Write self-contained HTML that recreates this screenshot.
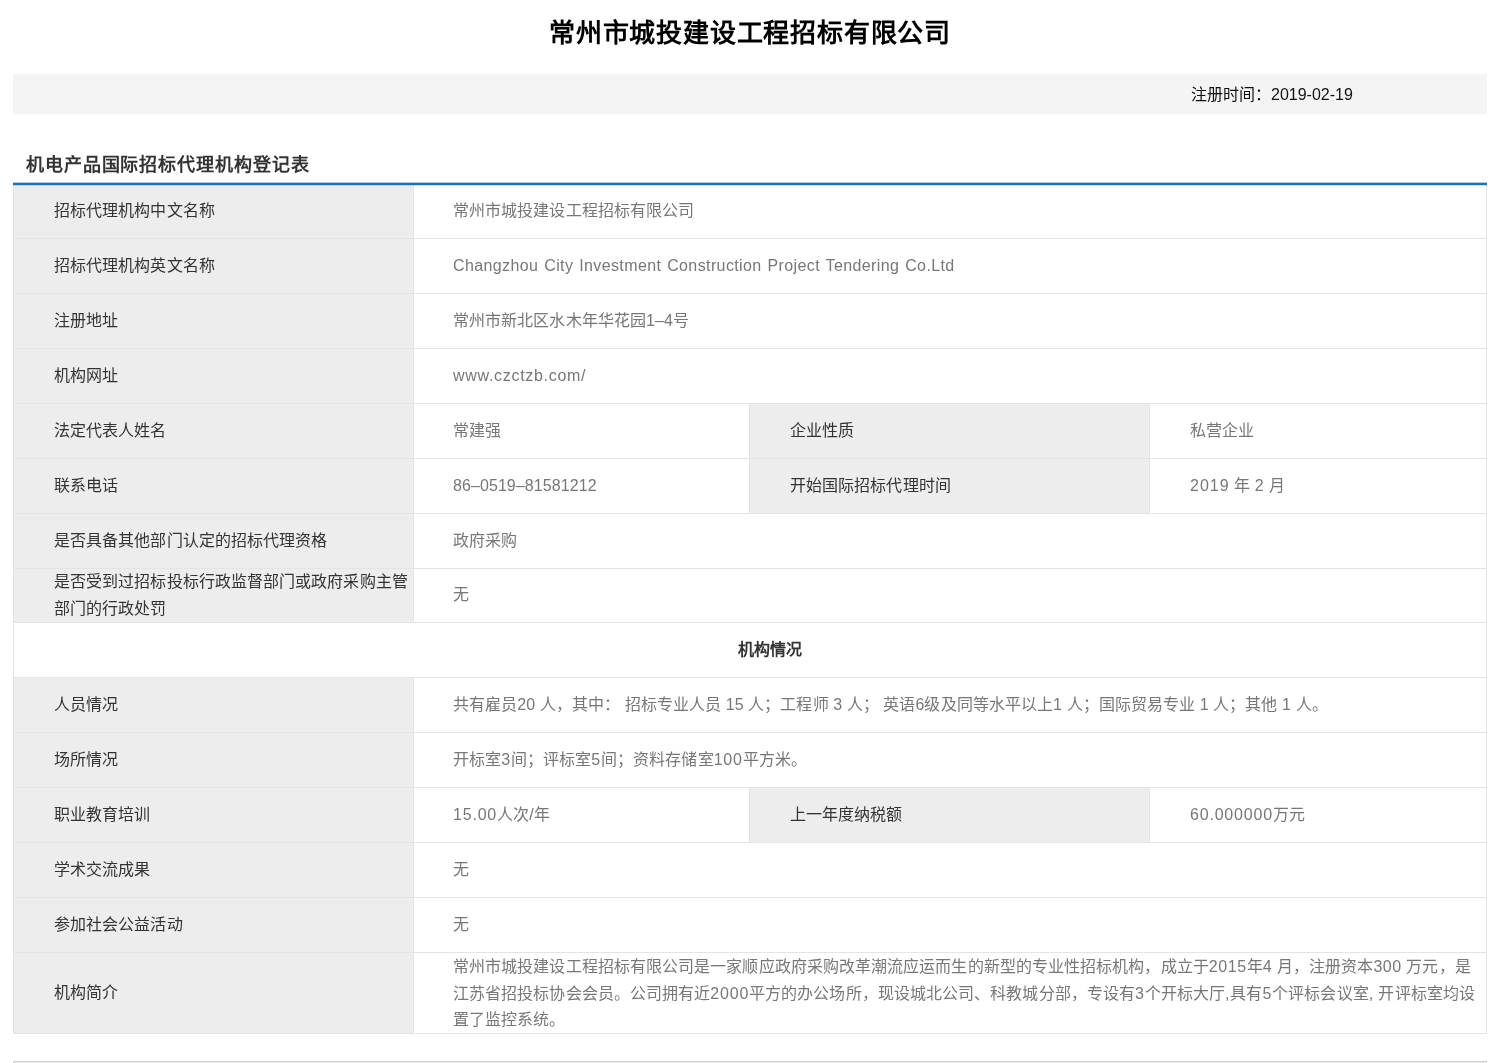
<!DOCTYPE html>
<html lang="zh-CN">
<head>
<meta charset="utf-8">
<style>
html,body{margin:0;padding:0;background:#fff;}
body{width:1500px;height:1063px;overflow:hidden;position:relative;font-family:"Liberation Sans",sans-serif;}
.t,.title,.regtime,.sect{will-change:transform;}
.r{position:absolute;}
.t{position:absolute;white-space:nowrap;font-size:16px;line-height:26.67px;letter-spacing:0.08px;}
.lb{color:#333;}
.vl{color:#777;}
.hd{color:#333;font-weight:bold;}
.title{position:absolute;left:0;top:14px;width:1500px;text-align:center;font-size:26px;letter-spacing:0.8px;font-weight:bold;color:#000;line-height:38px;white-space:nowrap;}
.regtime{position:absolute;left:1191px;top:84.5px;font-size:16px;color:#111;line-height:20px;white-space:nowrap;}
.sect{position:absolute;left:26px;top:151.5px;font-size:18px;letter-spacing:0.9px;font-weight:bold;color:#333;line-height:26px;white-space:nowrap;}
</style>
</head>
<body>
<div class="title">常州市城投建设工程招标有限公司</div>
<div class="r" style="left:13px;top:74px;width:1474px;height:40px;background:#f4f4f4"></div>
<div class="regtime">注册时间：2019-02-19</div>
<div class="sect">机电产品国际招标代理机构登记表</div>
<div class="r" style="left:13px;top:184px;width:400px;height:54px;background:#ededed"></div>
<div class="r" style="left:13px;top:238px;width:400px;height:55px;background:#ededed"></div>
<div class="r" style="left:13px;top:293px;width:400px;height:55px;background:#ededed"></div>
<div class="r" style="left:13px;top:348px;width:400px;height:55px;background:#ededed"></div>
<div class="r" style="left:13px;top:403px;width:400px;height:55px;background:#ededed"></div>
<div class="r" style="left:749px;top:403px;width:400px;height:55px;background:#ededed"></div>
<div class="r" style="left:13px;top:458px;width:400px;height:55px;background:#ededed"></div>
<div class="r" style="left:749px;top:458px;width:400px;height:55px;background:#ededed"></div>
<div class="r" style="left:13px;top:513px;width:400px;height:55px;background:#ededed"></div>
<div class="r" style="left:13px;top:568px;width:400px;height:54px;background:#ededed"></div>
<div class="r" style="left:13px;top:677px;width:400px;height:55px;background:#ededed"></div>
<div class="r" style="left:13px;top:732px;width:400px;height:55px;background:#ededed"></div>
<div class="r" style="left:13px;top:787px;width:400px;height:55px;background:#ededed"></div>
<div class="r" style="left:749px;top:787px;width:400px;height:55px;background:#ededed"></div>
<div class="r" style="left:13px;top:842px;width:400px;height:55px;background:#ededed"></div>
<div class="r" style="left:13px;top:897px;width:400px;height:55px;background:#ededed"></div>
<div class="r" style="left:13px;top:952px;width:400px;height:81px;background:#ededed"></div>
<div class="r" style="left:13px;top:238px;width:1474px;height:1px;background:#e4e4e4"></div>
<div class="r" style="left:13px;top:293px;width:1474px;height:1px;background:#e4e4e4"></div>
<div class="r" style="left:13px;top:348px;width:1474px;height:1px;background:#e4e4e4"></div>
<div class="r" style="left:13px;top:403px;width:1474px;height:1px;background:#e4e4e4"></div>
<div class="r" style="left:13px;top:458px;width:1474px;height:1px;background:#e4e4e4"></div>
<div class="r" style="left:13px;top:513px;width:1474px;height:1px;background:#e4e4e4"></div>
<div class="r" style="left:13px;top:568px;width:1474px;height:1px;background:#e4e4e4"></div>
<div class="r" style="left:13px;top:622px;width:1474px;height:1px;background:#e4e4e4"></div>
<div class="r" style="left:13px;top:677px;width:1474px;height:1px;background:#e4e4e4"></div>
<div class="r" style="left:13px;top:732px;width:1474px;height:1px;background:#e4e4e4"></div>
<div class="r" style="left:13px;top:787px;width:1474px;height:1px;background:#e4e4e4"></div>
<div class="r" style="left:13px;top:842px;width:1474px;height:1px;background:#e4e4e4"></div>
<div class="r" style="left:13px;top:897px;width:1474px;height:1px;background:#e4e4e4"></div>
<div class="r" style="left:13px;top:952px;width:1474px;height:1px;background:#e4e4e4"></div>
<div class="r" style="left:13px;top:1033px;width:1474px;height:1px;background:#e4e4e4"></div>
<div class="r" style="left:13px;top:184px;width:1px;height:850px;background:#e4e4e4"></div>
<div class="r" style="left:1486px;top:184px;width:1px;height:850px;background:#e4e4e4"></div>
<div class="r" style="left:413px;top:184px;width:1px;height:54px;background:#e4e4e4"></div>
<div class="r" style="left:413px;top:238px;width:1px;height:55px;background:#e4e4e4"></div>
<div class="r" style="left:413px;top:293px;width:1px;height:55px;background:#e4e4e4"></div>
<div class="r" style="left:413px;top:348px;width:1px;height:55px;background:#e4e4e4"></div>
<div class="r" style="left:413px;top:403px;width:1px;height:55px;background:#e4e4e4"></div>
<div class="r" style="left:749px;top:403px;width:1px;height:55px;background:#e4e4e4"></div>
<div class="r" style="left:1149px;top:403px;width:1px;height:55px;background:#e4e4e4"></div>
<div class="r" style="left:413px;top:458px;width:1px;height:55px;background:#e4e4e4"></div>
<div class="r" style="left:749px;top:458px;width:1px;height:55px;background:#e4e4e4"></div>
<div class="r" style="left:1149px;top:458px;width:1px;height:55px;background:#e4e4e4"></div>
<div class="r" style="left:413px;top:513px;width:1px;height:55px;background:#e4e4e4"></div>
<div class="r" style="left:413px;top:568px;width:1px;height:54px;background:#e4e4e4"></div>
<div class="r" style="left:413px;top:677px;width:1px;height:55px;background:#e4e4e4"></div>
<div class="r" style="left:413px;top:732px;width:1px;height:55px;background:#e4e4e4"></div>
<div class="r" style="left:413px;top:787px;width:1px;height:55px;background:#e4e4e4"></div>
<div class="r" style="left:749px;top:787px;width:1px;height:55px;background:#e4e4e4"></div>
<div class="r" style="left:1149px;top:787px;width:1px;height:55px;background:#e4e4e4"></div>
<div class="r" style="left:413px;top:842px;width:1px;height:55px;background:#e4e4e4"></div>
<div class="r" style="left:413px;top:897px;width:1px;height:55px;background:#e4e4e4"></div>
<div class="r" style="left:413px;top:952px;width:1px;height:81px;background:#e4e4e4"></div>
<div class="t lb" style="left:54.00px;top:198.16px;">招标代理机构中文名称</div>
<div class="t vl" style="left:453.00px;top:198.16px;">常州市城投建设工程招标有限公司</div>
<div class="t lb" style="left:54.00px;top:252.66px;">招标代理机构英文名称</div>
<div class="t vl" style="left:453.00px;top:252.66px;"><span style="letter-spacing:0.39px;word-spacing:1.00px">Changzhou City Investment Construction Project Tendering Co.Ltd</span></div>
<div class="t lb" style="left:54.00px;top:307.67px;">注册地址</div>
<div class="t vl" style="left:453.00px;top:307.67px;">常州市新北区水木年华花园1–4号</div>
<div class="t lb" style="left:54.00px;top:362.67px;">机构网址</div>
<div class="t vl" style="left:453.00px;top:362.67px;"><span style="letter-spacing:0.70px;word-spacing:0.00px">www.czctzb.com/</span></div>
<div class="t lb" style="left:54.00px;top:417.67px;">法定代表人姓名</div>
<div class="t vl" style="left:453.00px;top:417.67px;">常建强</div>
<div class="t lb" style="left:790.00px;top:417.67px;">企业性质</div>
<div class="t vl" style="left:1190.00px;top:417.67px;">私营企业</div>
<div class="t lb" style="left:54.00px;top:472.67px;">联系电话</div>
<div class="t vl" style="left:453.00px;top:472.67px;">86–0519–81581212</div>
<div class="t lb" style="left:790.00px;top:472.67px;">开始国际招标代理时间</div>
<div class="t vl" style="left:1190.00px;top:472.67px;"><span style="letter-spacing:1.00px;word-spacing:0.00px">2019</span> 年 <span style="letter-spacing:1.00px;word-spacing:0.00px">2</span> 月</div>
<div class="t lb" style="left:54.00px;top:527.66px;">是否具备其他部门认定的招标代理资格</div>
<div class="t vl" style="left:453.00px;top:527.66px;">政府采购</div>
<div class="t lb" style="left:54.00px;top:568.83px;">是否受到过招标投标行政监督部门或政府采购主管<br>部门的行政处罚</div>
<div class="t vl" style="left:453.00px;top:582.16px;">无</div>
<div class="t hd" style="left:53px;width:1434px;top:636.66px;text-align:center">机构情况</div>
<div class="t lb" style="left:54.00px;top:691.66px;">人员情况</div>
<div class="t vl" style="left:453.00px;top:691.66px;">共有雇员<span style="letter-spacing:0.07px;word-spacing:0.00px">20</span> 人，其中： 招标专业人员 <span style="letter-spacing:0.07px;word-spacing:0.00px">15</span> 人；工程师 <span style="letter-spacing:0.07px;word-spacing:0.00px">3</span> 人； 英语<span style="letter-spacing:0.07px;word-spacing:0.00px">6</span>级及同等水平以上<span style="letter-spacing:0.07px;word-spacing:0.00px">1</span> 人；国际贸易专业 <span style="letter-spacing:0.07px;word-spacing:0.00px">1</span> 人；其他 <span style="letter-spacing:0.07px;word-spacing:0.00px">1</span> 人。</div>
<div class="t lb" style="left:54.00px;top:746.66px;">场所情况</div>
<div class="t vl" style="left:453.00px;top:746.66px;">开标室<span style="letter-spacing:0.80px;word-spacing:0.00px">3</span>间；评标室<span style="letter-spacing:0.80px;word-spacing:0.00px">5</span>间；资料存储室<span style="letter-spacing:0.80px;word-spacing:0.00px">100</span>平方米。</div>
<div class="t lb" style="left:54.00px;top:801.66px;">职业教育培训</div>
<div class="t vl" style="left:453.00px;top:801.66px;"><span style="letter-spacing:0.80px;word-spacing:0.00px">15.00</span>人次<span style="letter-spacing:0.80px;word-spacing:0.00px">/</span>年</div>
<div class="t lb" style="left:790.00px;top:801.66px;">上一年度纳税额</div>
<div class="t vl" style="left:1190.00px;top:801.66px;"><span style="letter-spacing:0.80px;word-spacing:0.00px">60.000000</span>万元</div>
<div class="t lb" style="left:54.00px;top:856.66px;">学术交流成果</div>
<div class="t vl" style="left:453.00px;top:856.66px;">无</div>
<div class="t lb" style="left:54.00px;top:911.66px;">参加社会公益活动</div>
<div class="t vl" style="left:453.00px;top:911.66px;">无</div>
<div class="t lb" style="left:54.00px;top:979.66px;">机构简介</div>
<div class="t vl" style="left:453.00px;top:953.50px;letter-spacing:0.08px">常州市城投建设工程招标有限公司是一家顺应政府采购改革潮流应运而生的新型的专业性招标机构，成立于<span style="letter-spacing:0.60px;word-spacing:0.00px">2015</span>年<span style="letter-spacing:0.60px;word-spacing:0.00px">4</span> 月，注册资本<span style="letter-spacing:0.60px;word-spacing:0.00px">300</span> 万元，是<br>江苏省招投标协会会员。公司拥有近<span style="letter-spacing:0.80px;word-spacing:0.00px">2000</span>平方的办公场所，现设城北公司、科教城分部，专设有<span style="letter-spacing:0.80px;word-spacing:0.00px">3</span>个开标大厅<span style="letter-spacing:0.80px;word-spacing:0.00px">,</span>具有<span style="letter-spacing:0.80px;word-spacing:0.00px">5</span>个评标会议室<span style="letter-spacing:0.80px;word-spacing:0.00px">,</span> 开评标室均设<br>置了监控系统。</div>
<div class="r" style="left:13px;top:182px;width:1474px;height:1px;background:rgba(26,111,191,0.35)"></div>
<div class="r" style="left:13px;top:183px;width:1474px;height:2px;background:#1a6fbf"></div>
<div class="r" style="left:13px;top:185px;width:1474px;height:1px;background:rgba(26,111,191,0.2)"></div>
<div class="r" style="left:13px;top:1061px;width:1474px;height:10px;background:#ebebeb;box-shadow:inset 0 1px 0 #d0d0d0, inset 1px 0 0 #d0d0d0, inset -1px 0 0 #d0d0d0"></div>
</body>
</html>
